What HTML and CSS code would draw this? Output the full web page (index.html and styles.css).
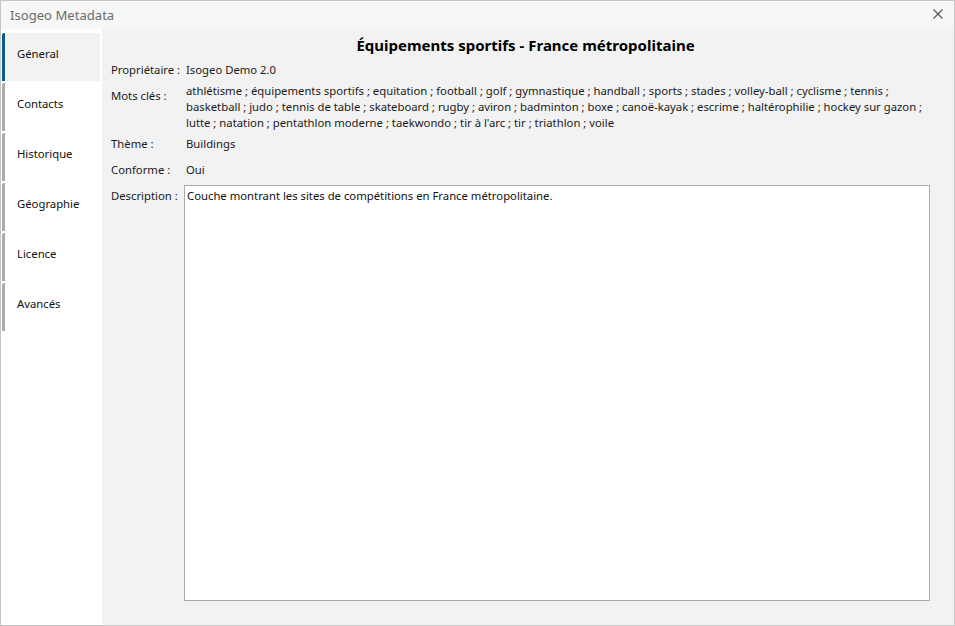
FILE: index.html
```html
<!DOCTYPE html>
<html lang="fr">
<head>
<meta charset="utf-8">
<title>Isogeo Metadata</title>
<link rel="stylesheet" href="styles.css">
</head>
<body>
<div class="window">
  <div class="titlebar">
    <span class="title">Isogeo Metadata</span>
    <svg class="close" width="10" height="10" viewBox="0 0 10 10"><path d="M0.5 0.5 L9.5 9.5 M9.5 0.5 L0.5 9.5" stroke="#555" stroke-width="1.2" fill="none"/></svg>
  </div>
  <div class="main">
    <nav class="sidebar">
      <div class="tab active">Géneral</div>
      <div class="tab">Contacts</div>
      <div class="tab">Historique</div>
      <div class="tab">Géographie</div>
      <div class="tab">Licence</div>
      <div class="tab">Avancés</div>
    </nav>
    <section class="content">
      <h1 class="heading">Équipements sportifs - France métropolitaine</h1>
      <div class="fields">
        <div class="label row-owner">Propriétaire :</div>
        <div class="value row-owner">Isogeo Demo 2.0</div>
        <div class="label row-kw kw-label">Mots clés :</div>
        <div class="value row-kw kw">athlétisme ; équipements sportifs ; equitation ; football ; golf ; gymnastique ; handball ; sports ; stades ; volley-ball ; cyclisme ; tennis ; basketball ; judo ; tennis de table ; skateboard ; rugby ; aviron ; badminton ; boxe ; canoë-kayak ; escrime ; haltérophilie ; hockey sur gazon ; lutte ; natation ; pentathlon moderne ; taekwondo ; tir à l'arc ; tir ; triathlon ; voile</div>
        <div class="label row-theme">Thème :</div>
        <div class="value row-theme">Buildings</div>
        <div class="label row-conf">Conforme :</div>
        <div class="value row-conf">Oui</div>
        <div class="label row-desc desc-label">Description :</div>
        <div class="textbox">Couche montrant les sites de compétitions en France métropolitaine.</div>
      </div>
    </section>
  </div>
</div>
</body>
</html>
```
FILE: styles.css
```css
* { box-sizing: border-box; }
html, body { margin: 0; padding: 0; }
body {
  width: 955px;
  height: 626px;
  font-family: "Noto Sans", "Open Sans", sans-serif;
  font-size: 11.3px;
  color: #1a1a1a;
  background: #f2f2f2;
}
.window {
  width: 955px;
  height: 626px;
  border: 1px solid #c6c6c6;
  display: flex;
  flex-direction: column;
  background: #f2f2f2;
}
.titlebar {
  height: 28px;
  flex: none;
  background: #f6f7f7;
  display: flex;
  align-items: center;
  justify-content: space-between;
  padding: 0 11px 0 9px;
}
.title {
  font-size: 13.1px;
  color: #6b6b6b;
  line-height: 16px;
  margin-top: -1px;
}
.close { display: block; margin-top: -2px; }
.main {
  flex: 1;
  display: flex;
  min-height: 0;
}
.sidebar {
  width: 101px;
  flex: none;
  background: #ffffff;
  padding: 4px 2px 0 1px;
  display: flex;
  flex-direction: column;
  gap: 2px;
}
.tab {
  height: 48px;
  border-left: 3px solid #ababab;
  border-top-left-radius: 2px;
  padding-left: 12px;
  display: flex;
  align-items: center;
  padding-bottom: 8px;
  color: #111;
}
.tab.active {
  background: #f2f2f2;
  border-left-color: #0b5a8c;
}
.content {
  flex: 1;
  display: flex;
  flex-direction: column;
  padding: 6px 24px 24px 9px;
  min-width: 0;
}
.heading {
  margin: 0 0 7px 0;
  font-size: 15px;
  font-weight: bold;
  line-height: 20px;
  text-align: center;
  color: #000;
  padding-left: 10px;
}
.fields {
  flex: 1;
  display: grid;
  grid-template-columns: 73px 1fr;
  grid-template-rows: auto auto auto auto 1fr;
  line-height: 16px;
  min-height: 0;
}
.label { color: #1a1a1a; white-space: nowrap; }
.value { padding-left: 2px; }
.row-owner { margin-bottom: 5px; }
.kw-label { margin-top: 5px; }
.kw { margin-bottom: 5px; }
.row-theme { margin-bottom: 10px; }
.row-conf { margin-bottom: 7px; }
.desc-label { margin-top: 3px; }
.textbox {
  background: #ffffff;
  border: 1px solid #ababab;
  padding: 2px 2px;
  line-height: 16px;
  color: #111;
}
```
